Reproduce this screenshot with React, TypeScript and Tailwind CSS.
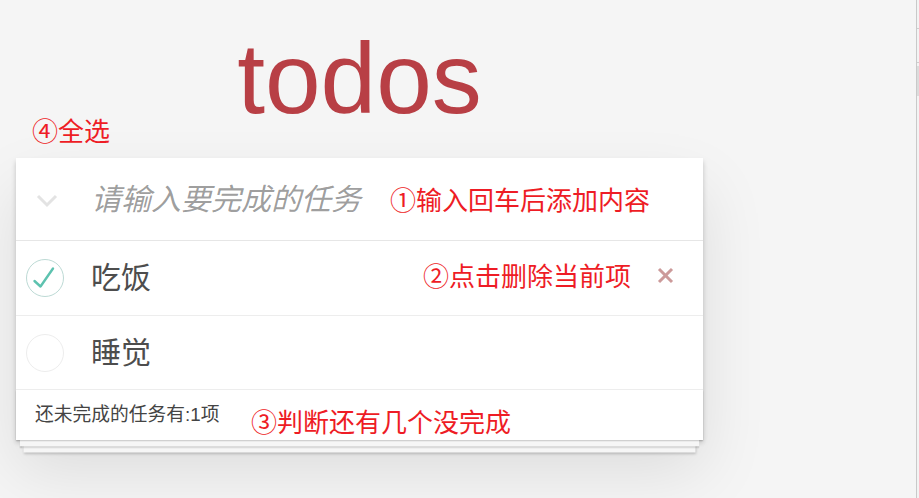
import React from "react";

const CJK = { fontFamily: '"Liberation Sans", "Noto Sans CJK SC", sans-serif' };
const NOTE = { fontFamily: '"Noto Sans CJK SC", "Liberation Sans", sans-serif' };

function Toggle({ done }: { done: boolean }) {
  return (
    <svg width="40" height="40" viewBox="0 0 40 40" className="ml-[9px] shrink-0">
      <circle cx="20" cy="20" r="18.5" fill="none" stroke={done ? "#bddad5" : "#ededed"} strokeWidth="1" />
      {done && (
        <polyline
          points="9.5,23 15.5,28.5 28,10.5"
          fill="none"
          stroke="#5dc2af"
          strokeWidth="2.4"
          strokeLinecap="round"
          strokeLinejoin="round"
        />
      )}
    </svg>
  );
}

function Item({ text, done, height, showDelete }: { text: string; done: boolean; height: string; showDelete?: boolean }) {
  return (
    <li className={`flex items-center border-b border-[#ededed] ${height}`}>
      <Toggle done={done} />
      <span className="ml-[26px] flex-1 text-[30px] leading-none text-[#4d4d4d]" style={CJK}>
        {text}
      </span>
      {showDelete && (
        <svg width="17" height="17" viewBox="0 0 17 17" className="mr-[29px] mt-[-6px] shrink-0">
          <line x1="2" y1="2" x2="15" y2="15" stroke="#cc9a9a" strokeWidth="3" />
          <line x1="15" y1="2" x2="2" y2="15" stroke="#cc9a9a" strokeWidth="3" />
        </svg>
      )}
    </li>
  );
}

export default function App() {
  return (
    <div className="relative flex h-[498px] w-[919px] overflow-hidden bg-[#f5f5f5]">
      <div className="flex w-[916px] flex-col">
        <h1
          className="ml-[16px] mt-[28px] h-[100px] w-[687px] text-center text-[100px] font-normal leading-[100px] text-[#b83f45]"
          style={{ fontFamily: '"Liberation Sans", Arial, sans-serif' }}
        >
          todos
        </h1>
        <section className="ml-[16px] mt-[30px] w-[687px] bg-white shadow-[0_2.5px_5px_0_rgba(0,0,0,0.2),0_31px_62px_0_rgba(0,0,0,0.1)]">
          <header className="flex h-[83px] items-center border-b border-[#e6e6e6]">
            <svg width="22" height="14" viewBox="0 0 22 14" className="ml-[20px] mr-[33px] mt-[4px] shrink-0">
              <polyline points="2,2 11,11 20,2" fill="none" stroke="#e3e3e3" strokeWidth="3" />
            </svg>
            <input
              className="min-w-0 flex-1 bg-transparent text-[30px] italic text-[#4d4d4d] outline-none placeholder:text-black/40"
              style={CJK}
              placeholder="请输入要完成的任务"
            />
          </header>
          <ul>
            <Item text="吃饭" done height="h-[75px]" showDelete />
            <Item text="睡觉" done={false} height="h-[74px]" />
          </ul>
          <footer className="relative flex h-[50px] items-center pl-[19px] text-[18.75px] text-[#444]" style={CJK}>
            <div className="pointer-events-none absolute inset-0 shadow-[0_1.25px_1.25px_rgba(0,0,0,0.2),0_10px_0_-3.75px_#f6f6f6,0_11.25px_1.25px_-3.75px_rgba(0,0,0,0.2),0_20px_0_-7.5px_#f6f6f6,0_21.25px_2.5px_-7.5px_rgba(0,0,0,0.2)]" />
            <span className="relative">还未完成的任务有:1项</span>
          </footer>
        </section>
      </div>
      <div className="w-px bg-[#c9c9c9]" />
      <div className="flex w-[2px] flex-col bg-[#f3f3f3]">
        <div className="mt-[28px] h-px bg-[#cfcfcf]" />
        <div className="mt-[33px] h-px bg-[#cfcfcf]" />
        <div className="mt-[3px] h-[30px] bg-[#dcdcdc]" />
      </div>

      <div className="absolute left-[32px] top-[117px] text-[26px] leading-none text-[#ee1c25]" style={NOTE}>
        ④全选
      </div>
      <div className="absolute left-[390px] top-[186px] text-[26px] leading-none text-[#ee1c25]" style={NOTE}>
        ①输入回车后添加内容
      </div>
      <div className="absolute left-[423px] top-[262px] text-[26px] leading-none text-[#ee1c25]" style={NOTE}>
        ②点击删除当前项
      </div>
      <div className="absolute left-[251px] top-[408px] text-[26px] leading-none text-[#ee1c25]" style={NOTE}>
        ③判断还有几个没完成
      </div>
    </div>
  );
}
